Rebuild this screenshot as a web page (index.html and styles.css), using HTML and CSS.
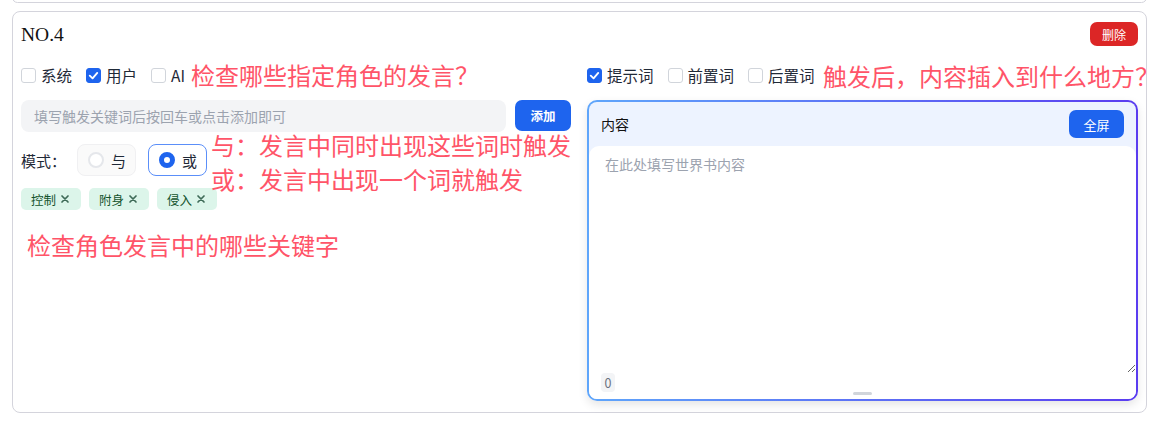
FILE: index.html
```html
<!DOCTYPE html>
<html lang="zh-CN">
<head>
<meta charset="utf-8">
<title>世界书</title>
<link rel="stylesheet" href="styles.css">
</head>
<body>
<div class="list">
  <div class="card card-prev"></div>
  <div class="card">
    <div class="card-head">
      <h3 class="title">NO.4</h3>
      <button class="btn btn-danger">删除</button>
    </div>
    <div class="cols">
      <div class="col">
        <div class="checks">
          <label class="check"><span class="box"></span>系统</label>
          <label class="check"><span class="box on"><svg viewBox="0 0 16 16" width="15" height="15"><polyline points="4,8.2 7,11 12,5.2" fill="none" stroke="#fff" stroke-width="2" stroke-linecap="round" stroke-linejoin="round"/></svg></span>用户</label>
          <label class="check"><span class="box"></span>AI</label>
        </div>
        <div class="add-row">
          <input class="kw-input" type="text" placeholder="填写触发关键词后按回车或点击添加即可">
          <button class="btn btn-primary btn-add">添加</button>
        </div>
        <div class="mode-row">
          <span class="mode-label">模式：</span>
          <label class="radio"><span class="dot"></span>与</label>
          <label class="radio active"><span class="dot"></span>或</label>
        </div>
        <div class="tags">
          <span class="tag">控制<svg class="x" viewBox="0 0 10 10" width="10" height="10"><path d="M2 2L8 8M8 2L2 8" stroke="#3f6b58" stroke-width="1.7" stroke-linecap="round"/></svg></span>
          <span class="tag">附身<svg class="x" viewBox="0 0 10 10" width="10" height="10"><path d="M2 2L8 8M8 2L2 8" stroke="#3f6b58" stroke-width="1.7" stroke-linecap="round"/></svg></span>
          <span class="tag">侵入<svg class="x" viewBox="0 0 10 10" width="10" height="10"><path d="M2 2L8 8M8 2L2 8" stroke="#3f6b58" stroke-width="1.7" stroke-linecap="round"/></svg></span>
        </div>
      </div>
      <div class="col">
        <div class="checks">
          <label class="check"><span class="box on"><svg viewBox="0 0 16 16" width="15" height="15"><polyline points="4,8.2 7,11 12,5.2" fill="none" stroke="#fff" stroke-width="2" stroke-linecap="round" stroke-linejoin="round"/></svg></span>提示词</label>
          <label class="check"><span class="box"></span>前置词</label>
          <label class="check"><span class="box"></span>后置词</label>
        </div>
        <div class="editor">
          <div class="editor-head">
            <span class="editor-title">内容</span>
            <button class="btn btn-primary btn-full">全屏</button>
          </div>
          <div class="editor-body">
            <textarea class="editor-text" placeholder="在此处填写世界书内容"></textarea>
            <div class="editor-foot">
              <span class="count">0</span>
              <span class="grip"></span>
            </div>
          </div>
        </div>
      </div>
    </div>
    <div class="note n1">检查哪些指定角色的发言？</div>
    <div class="note n2">与：发言中同时出现这些词时触发</div>
    <div class="note n3">或：发言中出现一个词就触发</div>
    <div class="note n4">检查角色发言中的哪些关键字</div>
    <div class="note n5">触发后，内容插入到什么地方？</div>
  </div>
</div>
</body>
</html>
```

FILE: styles.css
```css
* { box-sizing: border-box; }
html, body {
  margin: 0;
  padding: 0;
  background: #fff;
  overflow: hidden;
  font-family: "Noto Sans CJK SC", "Noto Sans", sans-serif;
  color: #1f2937;
}
.list {
  display: flex;
  flex-direction: column;
  gap: 8px;
  padding-left: 12px;
  width: 1147px;
}
.card {
  position: relative;
  border: 1px solid #d4d4dc;
  border-radius: 8px;
  padding: 10px 8px 11px 8px;
  background: #fff;
}
.card-prev {
  height: 11px;
  margin-top: -8px;
  padding: 0;
}
.card-head {
  display: flex;
  align-items: center;
  justify-content: space-between;
  height: 24px;
  margin-bottom: 12px;
}
.title {
  margin: 2px 0 0 0;
  font-family: "Liberation Serif", serif;
  font-weight: normal;
  font-size: 19.5px;
  color: #111;
}
.btn {
  border: none;
  color: #fff;
  font-family: "Noto Sans CJK SC", sans-serif;
  cursor: pointer;
  padding: 0;
}
.btn-danger {
  width: 48px;
  height: 24px;
  border-radius: 7px;
  background: #dc2626;
  font-size: 12px;
}
.btn-primary { background: #1e64ee; }
.cols {
  display: grid;
  grid-template-columns: 550px 551px;
  column-gap: 16px;
}
.col {
  display: flex;
  flex-direction: column;
}
.checks {
  display: flex;
  align-items: center;
  gap: 14px;
  height: 34px;
  margin-bottom: 8px;
}
.check {
  display: flex;
  align-items: center;
  gap: 5px;
  font-size: 15.5px;
  color: #1f2937;
}
.box {
  width: 15px;
  height: 15px;
  border: 1px solid #d1d5db;
  border-radius: 3px;
  background: #fff;
  display: flex;
  align-items: center;
  justify-content: center;
}
.box.on {
  background: #1e64ee;
  border-color: #1e64ee;
}
.box svg { display: block; flex: none; }
.add-row {
  display: flex;
  gap: 9px;
  align-items: flex-start;
  margin-bottom: 12px;
}
.kw-input {
  flex: 1;
  height: 32px;
  border: none;
  border-radius: 8px;
  background: #f3f4f6;
  padding: 0 13px;
  font-family: "Noto Sans CJK SC", sans-serif;
  font-size: 14px;
  outline: none;
}
.kw-input::placeholder { color: #9ca3af; }
.btn-add {
  width: 56px;
  height: 31px;
  border-radius: 7px;
  font-size: 12.5px;
  font-weight: bold;
}
.mode-row {
  display: flex;
  align-items: center;
  height: 32px;
  margin-bottom: 12px;
}
.mode-label {
  font-size: 15px;
  color: #1f2937;
  width: 56px;
}
.radio {
  display: flex;
  align-items: center;
  gap: 7px;
  height: 32px;
  padding: 0 9px 0 10px;
  border: 1px solid #f0f0f2;
  border-radius: 8px;
  background: #fafafa;
  font-size: 15px;
  color: #1f2937;
  margin-right: 12px;
}
.radio .dot {
  width: 16px;
  height: 16px;
  border-radius: 50%;
  border: 2px solid #e5e7eb;
  background: #fff;
}
.radio.active {
  border-color: #5b8ff9;
  background: #fff;
}
.radio.active .dot {
  border: 5px solid #1e64ee;
  background: #fff;
}
.tags {
  display: flex;
  gap: 8px;
}
.tag {
  display: flex;
  align-items: center;
  gap: 4px;
  height: 22px;
  padding: 0 11px 0 10px;
  border-radius: 5px;
  background: #dcf5ea;
  color: #14532d;
  font-size: 12.5px;
}
.tag .x { display: block; }
.editor {
  height: 301px;
  display: flex;
  flex-direction: column;
  border: 2px solid transparent;
  border-radius: 10px;
  background:
    linear-gradient(#edf3ff, #edf3ff) padding-box,
    linear-gradient(90deg, #5fa6fb, #5a3cf0) border-box;
  box-shadow: 0 4px 10px rgba(0, 0, 0, 0.1);
  overflow: hidden;
}
.editor-head {
  display: flex;
  align-items: center;
  justify-content: space-between;
  height: 44px;
  padding: 0 12px 0 12px;
  flex: none;
}
.editor-title {
  font-size: 14px;
  color: #111;
}
.btn-full {
  width: 55px;
  height: 28px;
  border-radius: 7px;
  font-size: 13px;
}
.editor-body {
  flex: 1;
  display: flex;
  flex-direction: column;
  background: #fff;
  border-radius: 10px 10px 0 0;
}
.editor-text {
  display: block;
  width: 100%;
  height: 227px;
  border: none;
  outline: none;
  resize: vertical;
  padding: 8px 16px;
  font-family: "Noto Sans CJK SC", sans-serif;
  font-size: 14px;
  line-height: 20px;
  background: transparent;
  flex: none;
}
.editor-text::placeholder { color: #9ca3af; }
.editor-foot {
  display: grid;
  grid-template-rows: 19px 3px;
  padding: 0 12px 4px;
}
.count {
  justify-self: start;
  width: 14px;
  height: 19px;
  border-radius: 4px;
  background: #f3f4f6;
  color: #6b7280;
  font-size: 12.5px;
  line-height: 19px;
  text-align: center;
}
.grip {
  justify-self: center;
  width: 19px;
  height: 3px;
  border-radius: 2px;
  background: #d1d5db;
}
.note {
  position: absolute;
  white-space: nowrap;
  font-family: "Noto Sans CJK SC", sans-serif;
  font-size: 24px;
  line-height: 24px;
  color: #ff5468;
}
.n1 { left: 178px; top: 51px; }
.n2 { left: 198px; top: 121px; }
.n3 { left: 198px; top: 155px; }
.n4 { left: 14px; top: 221px; }
.n5 { left: 810px; top: 52px; }
```
